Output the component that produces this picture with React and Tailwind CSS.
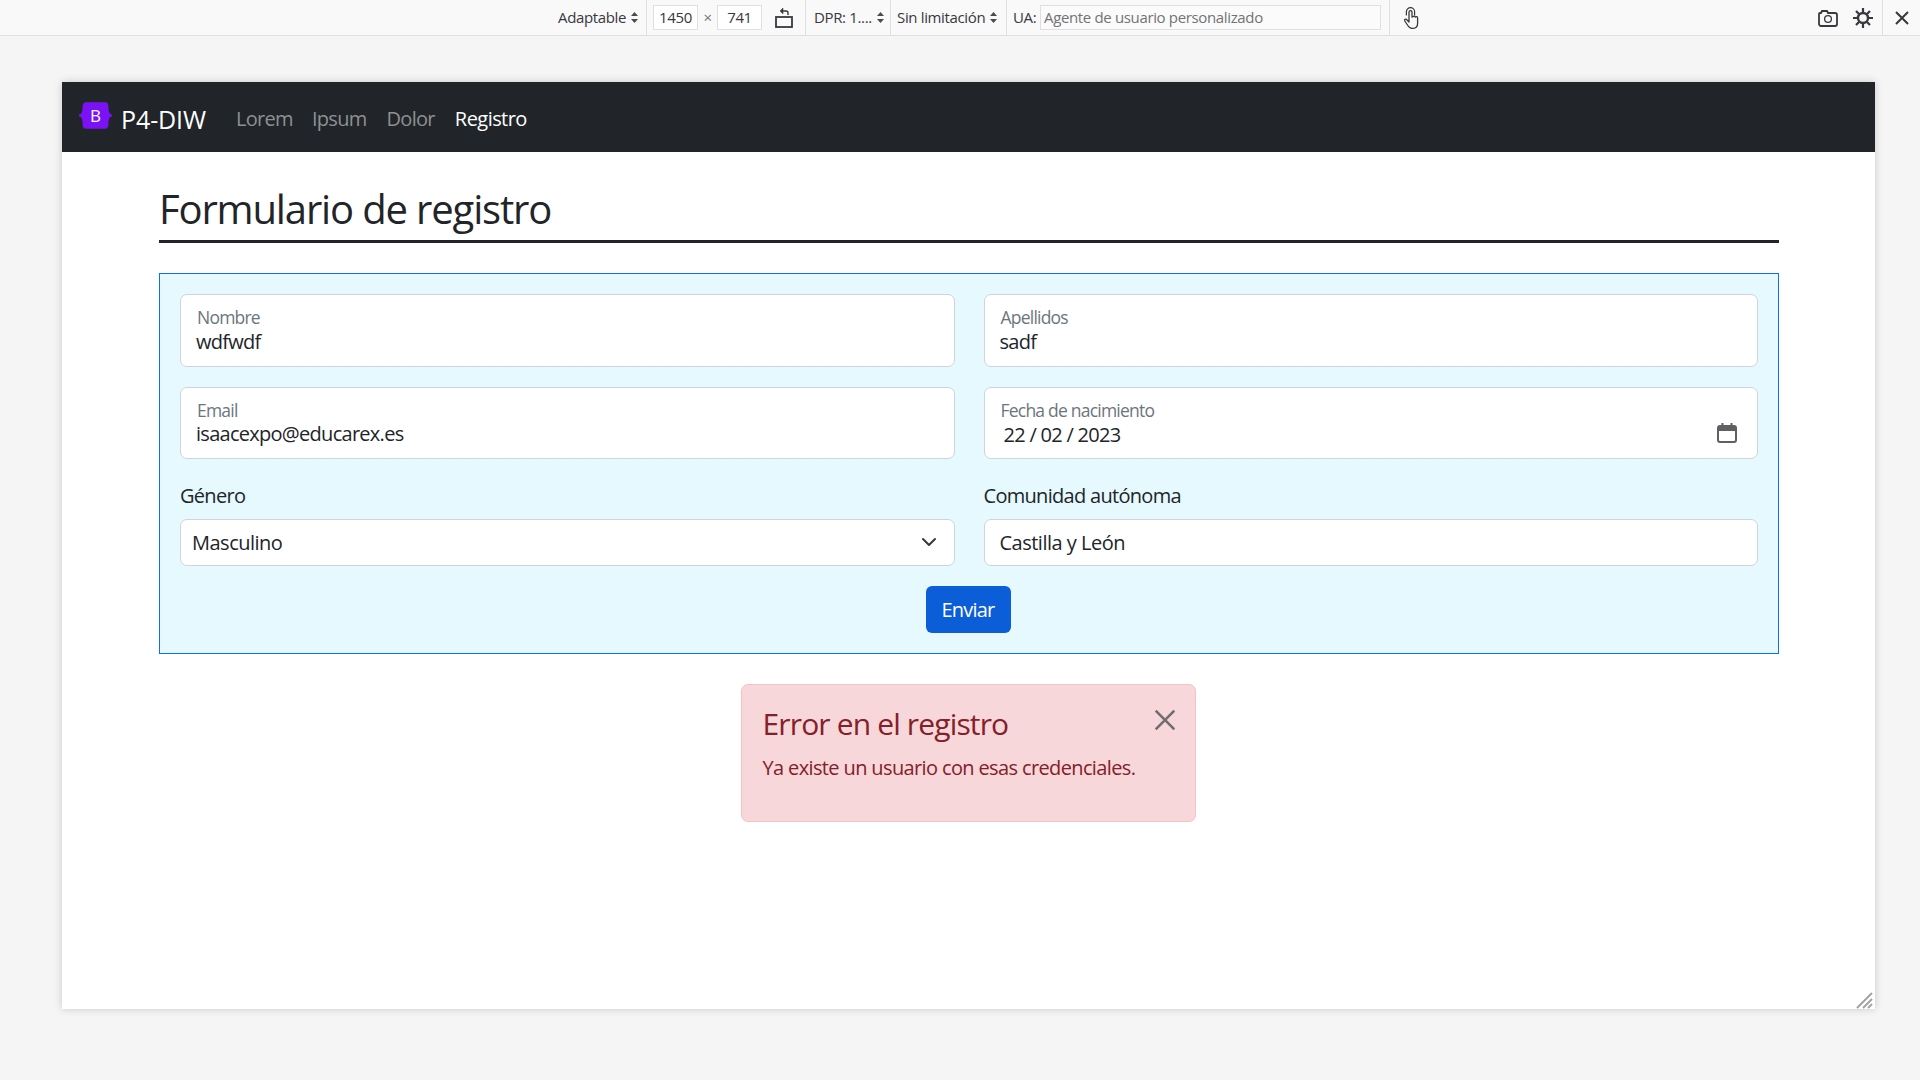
const font = { fontFamily: '"Open Sans", sans-serif' };

function Updown() {
  return (
    <svg width="7" height="11" viewBox="0 0 7 11" className="ml-[5px] shrink-0" fill="#4a4a4f">
      <path d="M3.5 0 7 4H0z" />
      <path d="M3.5 11 7 7H0z" />
    </svg>
  );
}

function Sep({ className = "" }) {
  return <div className={`w-px h-[35px] bg-[#e0e0e2] shrink-0 ${className}`} />;
}

function Toolbar() {
  return (
    <div className="h-[36px] shrink-0 bg-[#f9f9fa] border-b border-[#e0e0e2] flex items-center text-[15px] tracking-[-0.35px] text-[#38383d]">
      <div className="w-[558px] shrink-0" />
      <div className="flex items-center w-[88px] shrink-0">Adaptable<Updown /></div>
      <Sep />
      <div className="ml-[6px] w-[45px] h-[25px] border border-[#e0e0e2] bg-white flex items-center justify-center shrink-0">1450</div>
      <div className="w-[19px] text-center text-[#737373] shrink-0">×</div>
      <div className="w-[45px] h-[25px] border border-[#e0e0e2] bg-white flex items-center justify-center shrink-0">741</div>
      <div className="w-[43px] flex justify-center shrink-0">
        <svg width="18" height="20" viewBox="0 0 18 20" fill="none" stroke="#38383d">
          <rect x="1" y="9" width="16" height="10" strokeWidth="1.8" />
          <path d="M13 7V5a2 2 0 0 0-2-2H6" strokeWidth="1.4" />
          <path d="M8 0 5 3l3 3z" fill="#38383d" strokeWidth="0.5" />
        </svg>
      </div>
      <Sep />
      <div className="flex items-center w-[84px] pl-[8px] shrink-0">DPR: 1....<Updown /></div>
      <Sep />
      <div className="flex items-center w-[115px] pl-[6px] shrink-0">Sin limitación<Updown /></div>
      <Sep />
      <div className="ml-[6px] w-[27px] shrink-0">UA:</div>
      <div className="w-[341px] h-[25px] border border-[#e0e0e2] bg-[#fbfbfb] pl-[3px] flex items-center text-[#737373] shrink-0">Agente de usuario personalizado</div>
      <div className="w-[8px] shrink-0" />
      <Sep />
      <div className="w-[42px] flex justify-center shrink-0">
        <svg width="17" height="22" viewBox="0 0 17 22" fill="none" stroke="#38383d" strokeWidth="1.3" strokeLinejoin="round" strokeLinecap="round">
          <path d="M6 11V5.2a1.5 1.5 0 0 1 3 0V10l1.2-.3a1.2 1.2 0 0 1 2.2.4 1.2 1.2 0 0 1 2.2.7v5.7c0 2.800-1.800 4.800-4.500 4.800H9c-2 0-3.200-1-4.200-2.800L1.800 14c-.8-1.400 1-2.500 2-1.300L6 15z" />
          <path d="M3.400 8V4.800a4.100 4.100 0 0 1 8.200 0V8" strokeWidth="1.2" />
        </svg>
      </div>
      <div className="flex-1" />
      <svg width="20" height="18" viewBox="0 0 20 18" fill="none" stroke="#38383d" strokeWidth="1.8" className="shrink-0 mr-[15px]">
        <path d="M1 5a1 1 0 0 1 1-1h1l1-2h5l1 2h7a2 2 0 0 1 2 2v9a2 2 0 0 1-2 2H3a2 2 0 0 1-2-2z" />
        <circle cx="10" cy="10" r="3.4" strokeWidth="1.3" />
      </svg>
      <svg width="20" height="20" viewBox="0 0 20 20" fill="none" stroke="#38383d" className="shrink-0 mr-[9px]">
        <circle cx="10" cy="10" r="5" strokeWidth="2.4" />
        <path d="M10 0v4M10 16v4M0 10h4M16 10h4M3 3l3 3M14 14l3 3M17 3l-3 3M6 14l-3 3" strokeWidth="2.2" />
      </svg>
      <Sep />
      <div className="w-[37px] flex justify-center shrink-0">
        <svg width="14" height="14" viewBox="0 0 14 14" stroke="#38383d" strokeWidth="2" fill="none">
          <path d="M1 1l12 12M13 1 1 13" />
        </svg>
      </div>
    </div>
  );
}

function Logo() {
  return (
    <svg width="33" height="27" viewBox="0 0 118 94" className="shrink-0">
      <path fillRule="evenodd" clipRule="evenodd" fill="#7a12f5" d="M24.509 0c-6.733 0-11.715 5.893-11.492 12.284.214 6.14-.064 14.092-2.066 20.577C8.943 39.365 5.547 43.485 0 44.014v5.972c5.547.529 8.943 4.649 10.951 11.153 2.002 6.485 2.28 14.437 2.066 20.577C12.794 88.106 17.776 94 24.51 94H93.5c6.733 0 11.714-5.893 11.491-12.284-.214-6.14.064-14.092 2.066-20.577 2.009-6.504 5.396-10.624 10.943-11.153v-5.972c-5.547-.529-8.934-4.649-10.943-11.153-2.002-6.484-2.28-14.437-2.066-20.577C105.214 5.894 100.233 0 93.5 0H24.508z" />
    </svg>
  );
}

function Navbar() {
  return (
    <div className="h-[70px] bg-[#212529] flex items-center pl-[17px] shrink-0">
      <div className="relative flex items-center -mt-[3px]">
        <Logo />
        <span className="absolute left-0 w-[33px] text-center text-white text-[17px] font-medium leading-[27px]">B</span>
      </div>
      <span className="ml-[9px] mt-[4px] text-white text-[25px] leading-[30px] tracking-[-0.1px]">P4-DIW</span>
      <nav className="flex ml-[30px] mt-[4px] text-[20px] tracking-[-0.7px] leading-[30px]">
        <span className="text-[#8e9092] mr-[19px]">Lorem</span>
        <span className="text-[#8e9092] mr-[20px]">Ipsum</span>
        <span className="text-[#8e9092] mr-[20px]">Dolor</span>
        <span className="text-white tracking-[-0.55px]">Registro</span>
      </nav>
    </div>
  );
}

function Floating({ label, value, children, date, h = "h-[73px]", valueTop = "" }) {
  return (
    <div className={`relative ${h} flex-1 min-w-0 bg-white border border-[#ced4da] rounded-[7px] pl-[15px] pr-[20px]`}>
      <div className="pl-[1px] pt-[11px] text-[17.5px] leading-[22px] tracking-[-0.78px] text-[#6c757d]">{label}</div>
      <div className={`text-[20px] leading-[26px] tracking-[-0.72px] text-[#212529] ${date ? "pl-[4px]" : ""} ${valueTop}`}>{value}</div>
      {children}
    </div>
  );
}

function SelectField({ label, value, chevron, pad }) {
  return (
    <div className="flex-1 min-w-0">
      <div className="text-[20px] leading-[30px] tracking-[-0.7px] text-[#212529] mb-[8px]">{label}</div>
      <div className={`relative h-[47px] bg-white border border-[#ced4da] rounded-[7px] flex items-center text-[20px] tracking-[-0.5px] text-[#212529] ${pad}`}>
        {value}
        {chevron && (
          <svg width="16" height="16" viewBox="0 0 16 16" fill="none" stroke="#343a40" strokeWidth="2" strokeLinecap="round" strokeLinejoin="round" className="absolute right-[17px] top-[14px]">
            <path d="m2 5 6 6 6-6" />
          </svg>
        )}
      </div>
    </div>
  );
}

export default function App() {
  return (
    <div className="w-[1920px] h-[1080px] bg-[#f5f5f5] flex flex-col overflow-hidden" style={font}>
      <Toolbar />
      <div className="pt-[46px] pl-[62px]">
        <div className="relative w-[1813px] h-[927px] bg-white flex flex-col shadow-[0_0_8px_rgba(0,0,0,0.18)]">
          <Navbar />
          <main className="pl-[97px] pr-[96px] flex flex-col">
            <h1 className="mt-[32px] h-[50px] text-[40px] leading-[50px] tracking-[-1.15px] text-[#212529] font-normal">Formulario de registro</h1>
            <div className="mt-[6px] h-[3px] bg-[#212529]" />
            <form className="mt-[30px] h-[381px] bg-[#e5f9ff] border border-[#0d6efd] px-[20px] pt-[20px] flex flex-col">
              <div className="flex gap-[29px]">
                <Floating label="Nombre" value="wdfwdf" valueTop="mt-[1px]" />
                <Floating label="Apellidos" value="sadf" valueTop="mt-[1px]" />
              </div>
              <div className="flex gap-[29px] mt-[20px]">
                <Floating label="Email" value="isaacexpo@educarex.es" h="h-[72px]" />
                <Floating label="Fecha de nacimiento" value="22 / 02 / 2023" date h="h-[72px]" valueTop="mt-[1px]">
                  <svg width="20" height="20" viewBox="0 0 20 20" className="absolute right-[20px] top-[35px]" fill="none" stroke="#5f5f64" strokeWidth="2">
                    <rect x="1" y="3" width="18" height="16" rx="2" />
                    <path d="M1 6h18" strokeWidth="4" />
                    <path d="M5.5 0v4M14.5 0v4" />
                  </svg>
                </Floating>
              </div>
              <div className="flex gap-[29px] mt-[22px]">
                <SelectField label="Género" value="Masculino" chevron pad="pl-[11px]" />
                <SelectField label="Comunidad autónoma" value="Castilla y León" pad="pl-[15px]" />
              </div>
              <div className="flex justify-center mt-[20px] pr-[2px]">
                <button type="button" className="w-[85px] h-[47px] bg-[#0b5ed7] rounded-[6px] text-white text-[20px] tracking-[-0.8px]">Enviar</button>
              </div>
            </form>
            <div className="self-center mt-[30px] mr-[2px] w-[455px] h-[138px] bg-[#f8d7da] border border-[#f5c2c7] rounded-[7px] relative pl-[21px] pt-[21px]">
              <div className="text-[30px] leading-[36px] tracking-[-0.85px] text-[#842029]">Error en el registro</div>
              <div className="mt-[11px] text-[20px] leading-[30px] tracking-[-0.63px] text-[#842029]">Ya existe un usuario con esas credenciales.</div>
              <svg width="20" height="20" viewBox="0 0 16 16" stroke="#6f6f6f" strokeWidth="2.1" fill="none" className="absolute right-[20px] top-[25px]">
                <path d="M.5.5l15 15M15.5.5l-15 15" />
              </svg>
            </div>
          </main>
          <svg width="18" height="18" viewBox="0 0 18 18" stroke="#a3a3a3" strokeWidth="2" fill="none" className="absolute right-[1px] bottom-0">
            <path d="M1 17 16 2M7 17 16 8M12 17l4-4" />
          </svg>
        </div>
      </div>
    </div>
  );
}
